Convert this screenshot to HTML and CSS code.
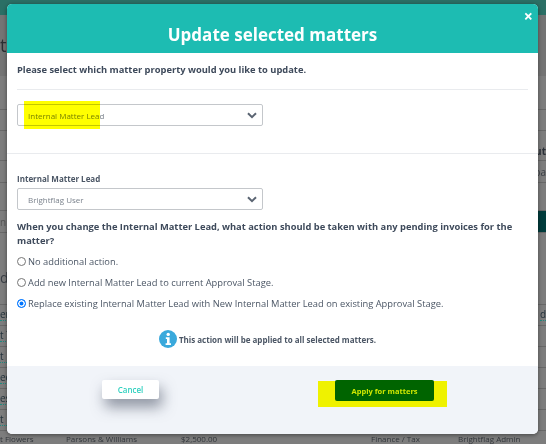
FILE: index.html
```html
<!DOCTYPE html>
<html lang="en">
<head>
<meta charset="utf-8">
<title>Update selected matters</title>
<link rel="stylesheet" href="styles.css">
</head>
<body>
<div class="page">
  <div class="topbar"></div>
  <div class="heading"><span class="heading-text">tt</span></div>
  <div class="bgrow h34"></div>
  <div class="bgrow h21"></div>
  <div class="bgrow h30 bold"><span></span><span class="r">ut</span></div>
  <div class="bgrow h22"><span></span><span class="r">pa</span></div>
  <div class="bgrow h28"></div>
  <div class="bgrow h22 band"><span class="faint">nb</span><i class="band-fill"></i></div>
  <div class="bgrow h72 tall"><span>d.</span></div>
  <div class="bgrow h21"><a>er</a><a class="r">d</a></div>
  <div class="bgrow h21"><a>t T</a></div>
  <div class="bgrow h21"><a>t F</a></div>
  <div class="bgrow h21"><a>ec</a></div>
  <div class="bgrow h21"><a>es</a></div>
  <div class="bgrow h21"><a>t F</a></div>
  <div class="lastrow"><span>t Flowers</span><span>Parsons &amp; Williams</span><span>$2,500.00</span><span>Finance / Tax</span><span>Brightflag Admin</span></div>
</div>

<div class="modal">
  <header class="modal-head">
    <h1>Update selected matters</h1>
    <span class="close">&#215;</span>
  </header>
  <section class="sec-one">
    <p class="strong">Please select which matter property would you like to update.</p>
    <hr class="rule">
    <div class="select"><span>Internal Matter Lead</span>
      <svg class="chev" viewBox="0 0 10 7"><path d="M1 1.2 5 5.2 9 1.2" fill="none" stroke="#5a6472" stroke-width="2"/></svg>
    </div>
  </section>
  <section class="sec-two">
    <label class="field-label">Internal Matter Lead</label>
    <div class="select"><span>Brightflag User</span>
      <svg class="chev" viewBox="0 0 10 7"><path d="M1 1.2 5 5.2 9 1.2" fill="none" stroke="#5a6472" stroke-width="2"/></svg>
    </div>
    <p class="strong question">When you change the Internal Matter Lead, what action should be taken with any pending invoices for the matter?</p>
    <div class="radio"><i class="dot"></i><span>No additional action.</span></div>
    <div class="radio"><i class="dot"></i><span>Add new Internal Matter Lead to current Approval Stage.</span></div>
    <div class="radio"><i class="dot on"></i><span>Replace existing Internal Matter Lead with New Internal Matter Lead on existing Approval Stage.</span></div>
    <div class="notice">
      <svg class="info" viewBox="0 0 18 18"><circle cx="9" cy="9" r="9" fill="#3aa9dc"/><circle cx="9.2" cy="4.4" r="1.7" fill="#fff"/><path d="M6.8 7.2h3.8v6h1.4v1.8H6.6v-1.8h1.4V9H6.8z" fill="#fff"/></svg>
      <span>This action will be applied to all selected matters.</span>
    </div>
  </section>
  <footer class="modal-foot">
    <button class="btn-cancel">Cancel</button>
    <div class="apply-wrap">
      <i class="mark-behind"></i>
      <button class="btn-apply">Apply for matters</button>
    </div>
  </footer>
  <i class="mark-over"></i>
</div>
</body>
</html>
```
FILE: styles.css
```css
* { box-sizing: border-box; }
html, body { margin: 0; padding: 0; }
body {
  width: 546px;
  height: 444px;
  overflow: hidden;
  position: relative;
  background: #7d7d7d;
  font-family: "Open Sans", "Liberation Sans", sans-serif;
  color: #3e4a5b;
}
.page { height: 444px; overflow: hidden; }
.topbar { height: 15px; background: #2b6f65; }
.heading { height: 61px; background: #747474; padding-top: 18px; overflow: hidden; }
.heading-text { font-size: 18px; line-height: 24px; color: #2c2f33; }
.bgrow {
  display: flex;
  justify-content: space-between;
  align-items: center;
  border-bottom: 1px solid #686868;
  font-size: 10px;
  color: #3a3f46;
}
.bgrow a { color: #23323c; border-bottom: 1px dotted #1e8a80; line-height: 11px; }
.bgrow .r { margin-left: auto; }
.bold { font-weight: 700; color: #2b3038; align-items: flex-end; padding-bottom: 2px; }
.faint { color: #555; }
.band { align-items: center; }
.band-fill { flex: none; width: 40px; height: 21px; background: #003c3c; }
.tall { align-items: flex-start; padding-top: 35px; font-size: 14px; }
.h21 { height: 21px; }
.h22 { height: 22px; }
.h28 { height: 28px; }
.h30 { height: 30px; }
.h34 { height: 34px; }
.h72 { height: 72px; }
.lastrow {
  display: grid;
  grid-template-columns: 66px 115px 190px 87px 88px;
  font-size: 8px;
  line-height: 12px;
  padding-top: 2px;
  color: #33373c;
  white-space: nowrap;
}

.modal {
  position: absolute;
  left: 7px;
  top: 4px;
  width: 531px;
  height: 430px;
  background: #fff;
  border-radius: 5px;
  box-shadow: 0 1px 4px rgba(0,0,0,.45);
  display: flex;
  flex-direction: column;
  overflow: hidden;
}
.modal-head {
  height: 49px;
  flex: none;
  background: #1dbcb2;
  color: #fff;
  display: flex;
  align-items: center;
  justify-content: center;
  position: relative;
}
.modal-head h1 {
  margin: 12px 0 0;
  font-size: 17px;
  line-height: 24px;
  font-weight: 700;
}
.close {
  position: absolute;
  right: 5px;
  top: 3px;
  font-size: 16px;
  line-height: 18px;
  font-weight: 700;
}
.strong {
  margin: 0;
  font-size: 9.33px;
  line-height: 14px;
  font-weight: 700;
  color: #3e4a5b;
}
.sec-one {
  height: 101px;
  flex: none;
  padding: 10px 10px 0;
  border-bottom: 1px solid #e9ebee;
}
.rule { border: 0; border-top: 1px solid #e9ebee; margin: 12px 0 14px; }
.select {
  width: 246px;
  height: 22px;
  border: 1px solid #c4c7cb;
  border-radius: 2px;
  display: flex;
  align-items: center;
  justify-content: space-between;
  padding: 0 5px 0 10px;
  font-size: 8px;
  color: #7a828c;
  background: #fff;
}
.chev { width: 10px; height: 7px; }
.sec-two { flex: 1; padding: 19px 10px 0; }
.field-label {
  display: block;
  font-size: 8px;
  line-height: 12px;
  font-weight: 700;
  color: #4b5665;
  margin-bottom: 3px;
}
.question { margin-top: 10px; margin-bottom: 3px; }
.radio {
  display: flex;
  align-items: center;
  gap: 2px;
  height: 21px;
  font-size: 9.33px;
  color: #4b5665;
}
.dot {
  width: 9px;
  height: 9px;
  border: 1px solid #767676;
  border-radius: 50%;
  flex: none;
  background: #fff;
}
.dot.on { border: 1px solid #0075ff; background: #0075ff; box-shadow: inset 0 0 0 1.5px #fff; }
.notice {
  display: flex;
  align-items: center;
  justify-content: center;
  gap: 2px;
  margin-top: 16px;
  padding-right: 10px;
  font-size: 8px;
  font-weight: 700;
  color: #4b5665;
}
.info { width: 18px; height: 18px; flex: none; }
.modal-foot {
  height: 68px;
  flex: none;
  background: #f1f4f9;
  display: flex;
  align-items: flex-start;
  padding: 14px 0 0 95px;
}
button { font-family: inherit; border: 0; cursor: pointer; padding: 0; }
.btn-cancel {
  width: 57px;
  height: 19px;
  background: #fff;
  border-radius: 2px;
  color: #2fd0bf;
  font-size: 8px;
  font-weight: 600;
  box-shadow: 3px 8px 14px rgba(60,70,90,.55);
}
.apply-wrap { margin-left: 176px; position: relative; }
.btn-apply {
  position: relative;
  width: 99px;
  height: 21px;
  background: #006400;
  border-radius: 2px;
  color: #cfe800;
  font-size: 7.5px;
  font-weight: 700;
  display: block;
}
.mark-behind {
  position: absolute;
  left: -17px;
  top: 1px;
  width: 129px;
  height: 26px;
  background: #eff200;
}
.mark-over {
  position: absolute;
  left: 17px;
  top: 97px;
  width: 76px;
  height: 28px;
  background: #ffff00;
  mix-blend-mode: multiply;
}
```
